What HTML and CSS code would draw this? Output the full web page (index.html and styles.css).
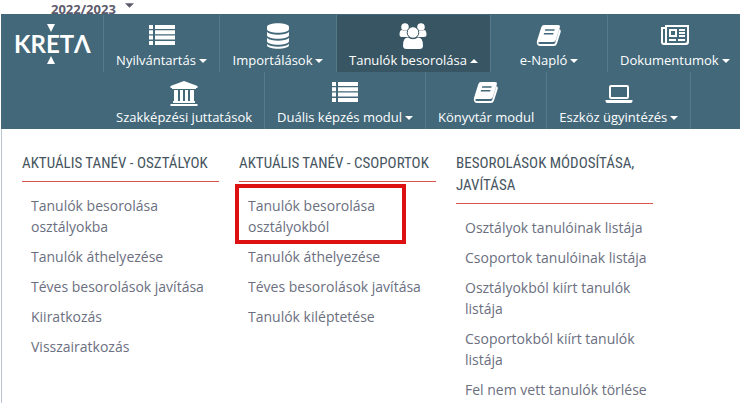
FILE: index.html
```html
<!DOCTYPE html>
<html lang="hu">
<head>
  <meta charset="UTF-8">
  <meta name="viewport" content="width=device-width, initial-scale=1.0">
  <title>KRÉTA - Tanulók besorolása</title>
  <link rel="stylesheet" href="styles.css">
</head>
<body>
  <!-- shared icons -->
  <svg class="sprite" aria-hidden="true">
    <symbol id="icon-list" viewBox="0 0 30 26">
      <path d="M2 2h4v4H2zM2 7.300h4v4H2zM2 12.600h4v4H2zM2 18h4v4H2zM8 2h20v4H8zM8 7.300h20v4H8zM8 12.600h20v4H8zM8 18h20v4H8z"/>
    </symbol>
    <symbol id="icon-book" viewBox="0 0 30 26">
      <path d="M10 2h14q2.400 0 1.800 2.400l-4 12.600q-.6 2-2.800 2H5.500q-1.200 0-1.200 1 0 1 1.500 1h13.700q1.300 0 1.700-1.300L25.500 6q1.800.8 1.200 3L23 20.500q-.8 2.500-3.200 2.500H6q-3 0-3.200-3.400 0-1.600.7-3.400L7.200 4.400Q8 2 10 2zm1.300 4.300-.5 1.400h9.500l.5-1.400zm-1.200 3.700-.5 1.400h9.500l.5-1.400z"/>
    </symbol>
  </svg>

  <div class="year">
    <select aria-label="Tanév">
      <option>2022/2023</option>
    </select>
    <svg class="year-arrow" viewBox="0 0 10 5"><path d="M0 0h10L5 5z"/></svg>
  </div>

  <header class="header">
    <a class="logo" href="#" aria-label="KRÉTA">KRETΛ</a>
    <nav class="nav">
      <ul class="nav-row">
        <li>
          <button class="nav-item" type="button">
            <svg class="icon"><use href="#icon-list"/></svg>
            <span class="down">Nyilvántartás</span>
          </button>
        </li>
        <li>
          <button class="nav-item" type="button">
            <svg class="icon" viewBox="0 0 30 26">
              <path d="M4 4c0-5 22-5 22 0v2c0 5-22 5-22 0z"/>
              <path d="M4 9c4 3.500 18 3.500 22 0v3c0 5-22 5-22 0z"/>
              <path d="M4 15c4 3.500 18 3.500 22 0v3c0 5-22 5-22 0z"/>
              <path d="M4 21c4 3.500 18 3.500 22 0v1c0 5-22 5-22 0z"/>
            </svg>
            <span class="down">Importálások</span>
          </button>
        </li>
        <li>
          <button class="nav-item active" type="button" aria-expanded="true">
            <svg class="icon" viewBox="0 0 30 26">
              <circle cx="7" cy="4" r="3.800"/>
              <circle cx="23" cy="4" r="3.800"/>
              <path d="M1.500 12q0-5 2.500-5 3 2 6 0-1.500 4 1 7H4q-2.500 0-2.500-2zM28.500 12q0-5-2.500-5-3 2-6 0 1.500 4-1 7h7q2.500 0 2.500-2z"/>
              <path d="M10 14.500q5 3.500 10 0 5 0 5 8 0 3.500-3.500 3.500h-13Q5 26 5 22.500q0-8 5-8z"/>
              <circle class="front-head" cx="15" cy="9.500" r="5.800"/>
            </svg>
            <span class="up">Tanulók besorolása</span>
          </button>
        </li>
        <li>
          <button class="nav-item" type="button">
            <svg class="icon"><use href="#icon-book"/></svg>
            <span class="down">e-Napló</span>
          </button>
        </li>
        <li>
          <button class="nav-item" type="button">
            <svg class="icon" viewBox="0 0 30 26">
              <path fill-rule="evenodd" d="M5 2h24v17q0 3-3 3H4q-3 0-3-3V4h4zm2 2v16h18q2 0 2-2V4zM3 6v13q0 1 1 1 1 0 1-1V6z"/>
              <path fill-rule="evenodd" d="M9 6h8v8H9zm2 2v4h4V8zM19 6h6v2h-6zM19 9h6v2h-6zM19 12h6v2h-6zM9 16h7v2H9zM18 16h7v2h-7z"/>
            </svg>
            <span class="down">Dokumentumok</span>
          </button>
        </li>
      </ul>
      <ul class="nav-row">
        <li>
          <a class="nav-item" href="#">
            <svg class="icon" viewBox="0 0 30 26">
              <path d="M15 1l13.500 5v2H27v1H3V8H1.500V6zM5 10h4v11h2V10h3v11h2V10h3v11h2V10h4v11h1v2H4v-2h1zM1.500 24h27v2h-27z"/>
            </svg>
            <span>Szakképzési juttatások</span>
          </a>
        </li>
        <li>
          <button class="nav-item" type="button">
            <svg class="icon"><use href="#icon-list"/></svg>
            <span class="down">Duális képzés modul</span>
          </button>
        </li>
        <li>
          <a class="nav-item" href="#">
            <svg class="icon"><use href="#icon-book"/></svg>
            <span>Könyvtár modul</span>
          </a>
        </li>
        <li>
          <button class="nav-item" type="button">
            <svg class="icon" viewBox="0 0 30 26">
              <path fill-rule="evenodd" d="M7 5h16q2 0 2 2v10q0 2-2 2H7q-2 0-2-2V7q0-2 2-2zm0 2v10h16V7zM1.500 20h27v1q0 2-2 2h-23q-2 0-2-2z"/>
            </svg>
            <span class="down">Eszköz ügyintézés</span>
          </button>
        </li>
      </ul>
    </nav>
  </header>

  <main class="menu">
    <section>
      <h2>Aktuális tanév - osztályok</h2>
      <ul>
        <li><a href="#">Tanulók besorolása osztályokba</a></li>
        <li><a href="#">Tanulók áthelyezése</a></li>
        <li><a href="#">Téves besorolások javítása</a></li>
        <li><a href="#">Kiiratkozás</a></li>
        <li><a href="#">Visszairatkozás</a></li>
      </ul>
    </section>
    <section>
      <h2>Aktuális tanév - csoportok</h2>
      <ul>
        <li class="marked"><a href="#">Tanulók besorolása osztályokból</a></li>
        <li><a href="#">Tanulók áthelyezése</a></li>
        <li><a href="#">Téves besorolások javítása</a></li>
        <li><a href="#">Tanulók kiléptetése</a></li>
      </ul>
    </section>
    <section>
      <h2>Besorolások módosítása, javítása</h2>
      <ul>
        <li><a href="#">Osztályok tanulóinak listája</a></li>
        <li><a href="#">Csoportok tanulóinak listája</a></li>
        <li><a href="#">Osztályokból kiírt tanulók listája</a></li>
        <li><a href="#">Csoportokból kiírt tanulók listája</a></li>
        <li><a href="#">Fel nem vett tanulók törlése</a></li>
      </ul>
    </section>
  </main>
</body>
</html>
```
FILE: styles.css
```css
* {
  box-sizing: border-box;
}
body {
  margin: 0;
  padding-left: 1px;
  background: #ffffff;
  color: #6b6f80;
  font-family: "Open Sans", sans-serif;
  font-size: 14px;
  overflow-x: hidden;
}
ul {
  list-style: none;
  margin: 0;
  padding: 0;
}
a {
  color: inherit;
  text-decoration: none;
}
.sprite {
  position: absolute;
  width: 0;
  height: 0;
}

/* school year */
.year {
  display: flex;
  height: 14px;
  padding-left: 50px;
  overflow: hidden;
}
.year select {
  appearance: none;
  height: 18px;
  width: 74px;
  padding: 0;
  border: 0;
  background: none;
  color: #5c5a6b;
  font: bold 13px/18px "Open Sans", sans-serif;
}
.year-arrow {
  width: 9px;
  height: 5px;
  margin-top: 3px;
  fill: #5c5a6b;
}

/* header */
.header {
  display: flex;
  padding-top: 1px;
  background: #42687a;
  color: #ffffff;
}
.logo {
  position: relative;
  flex: 0 0 102px;
  padding: 12px 0 0 13px;
  font: bold 24px/34px Lato, "Open Sans", sans-serif;
}
.logo::before,
.logo::after {
  content: "";
  position: absolute;
  left: 46px;
  border: 4px solid transparent;
}
.logo::before {
  top: 9px;
  border-top: 8px solid #ffffff;
  border-bottom: 0;
}
.logo::after {
  top: 41px;
  border-bottom: 8px solid #ffffff;
  border-top: 0;
}
.nav {
  flex: 1;
  min-width: 0;
}
.nav-row {
  display: flex;
}
.nav-row li {
  flex: none;
  min-width: 117px;
  border-right: 1px solid #557b8b;
}
.nav-row:first-child li:first-child {
  border-left: 1px solid #557b8b;
}
.nav-row:last-child {
  padding-left: 1px;
}
.nav-item {
  display: flex;
  flex-direction: column;
  align-items: center;
  gap: 2px;
  width: 100%;
  padding: 8px 12px 3px;
  border: 0;
  background: none;
  color: #ffffff;
  font: 13px/18px "Open Sans", sans-serif;
  white-space: nowrap;
  cursor: pointer;
}
.nav-item.active {
  background: #375562;
}
.icon {
  width: 30px;
  height: 26px;
  fill: #ffffff;
}
.front-head {
  stroke: #375562;
}
.down::after,
.up::after {
  content: "";
  display: inline-block;
  margin-left: 3px;
  vertical-align: 2px;
  border: 4px solid transparent;
}
.down::after {
  border-top-color: #ffffff;
  border-bottom: 0;
}
.up::after {
  border-bottom-color: #ffffff;
  border-top: 0;
}

/* open menu */
.menu {
  display: grid;
  grid-template-columns: repeat(auto-fill, 197px);
  gap: 20px;
  min-height: calc(100vh - 129px);
  padding: 23px 20px 0;
  border-left: 1px solid #b9c6d2;
}
.menu h2 {
  margin: 0 0 13px;
  padding-bottom: 7px;
  border-bottom: 1px solid #d9534f;
  color: #465560;
  font: 15px/22px "Roboto Condensed", Roboto, sans-serif;
  text-transform: uppercase;
}
.menu ul {
  padding-left: 9px;
}
.menu li {
  margin-bottom: 9px;
  line-height: 21px;
}
.menu a {
  display: block;
}
.marked {
  position: relative;
}
.marked::after {
  content: "";
  position: absolute;
  inset: -11px 30px -7px -13px;
  border: 4px solid #dd1111;
  pointer-events: none;
}
```
